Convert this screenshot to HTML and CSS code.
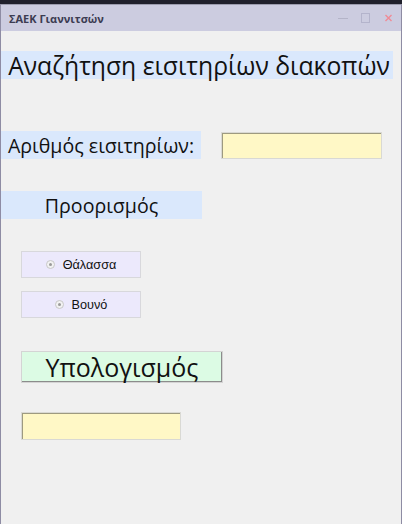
FILE: index.html
```html
<!DOCTYPE html>
<html lang="el">
<head>
<meta charset="utf-8">
<title>ΣΑΕΚ Γιαννιτσών</title>
<link rel="stylesheet" href="styles.css">
</head>
<body>
<div class="topstrip"></div>
<div class="window">
  <div class="titlebar">
    <span class="title">ΣΑΕΚ Γιαννιτσών</span>
    <div class="controls">
      <svg class="ctl" width="12" height="12" viewBox="0 0 12 12"><line x1="1" y1="6.5" x2="11" y2="6.5" stroke="#b4b4c8" stroke-width="1"/></svg>
      <svg class="ctl" width="12" height="12" viewBox="0 0 12 12"><rect x="1.5" y="1.5" width="8" height="9" fill="none" stroke="#b4b4cc" stroke-width="1"/></svg>
      <svg class="ctl" width="12" height="12" viewBox="0 0 12 12"><path d="M2.5 3 L8.5 9 M8.5 3 L2.5 9" stroke="#f08a96" stroke-width="1.4"/></svg>
    </div>
  </div>
  <div class="content">
    <div class="heading">Αναζήτηση εισιτηρίων διακοπών</div>
    <div class="row tickets">
      <div class="label">Αριθμός εισιτηρίων:</div>
      <div class="field input"></div>
    </div>
    <div class="label dest">Προορισμός</div>
    <div class="radio sea"><span class="dot"></span>Θάλασσα</div>
    <div class="radio mountain"><span class="dot"></span>Βουνό</div>
    <div class="button">Υπολογισμός</div>
    <div class="field output"></div>
  </div>
</div>
</body>
</html>
```
FILE: styles.css
```css
html, body {
  margin: 0;
  padding: 0;
  width: 402px;
  height: 524px;
  overflow: hidden;
  background: #f0f0f0;
  font-family: "Open Sans", "Noto Sans", sans-serif;
}
.topstrip {
  height: 4px;
  background: #20202c;
}
.window {
  height: 520px;
  border-left: 1px solid #8e8ca4;
  border-right: 1px solid #8e8ca4;
  border-top: 1px solid #9c9cae;
  box-sizing: border-box;
  background: #f0f0f0;
}
.titlebar {
  height: 26px;
  background: #cccce0;
  display: flex;
  align-items: center;
  justify-content: space-between;
  padding: 0 6px 0 8px;
}
.title {
  font-family: "Open Sans", "Noto Sans", sans-serif;
  font-weight: 700;
  font-size: 11px;
  color: #3c3c52;
}
.controls {
  display: flex;
  gap: 11px;
  align-items: center;
}
.content {
  display: flex;
  flex-direction: column;
  align-items: flex-start;
  padding-top: 20px;
}
.heading {
  width: 392px;
  height: 28px;
  padding-left: 4px;
  box-sizing: border-box;
  background: #dae8fc;
  font-size: 24.7px;
  line-height: 30px;
  color: #111;
  text-align: center;
  white-space: nowrap;
  overflow: visible;
}
.row {
  display: flex;
  align-items: center;
}
.tickets {
  margin-top: 52px;
  gap: 20px;
}
.label {
  width: 200px;
  height: 28px;
  background: #dae8fc;
  font-size: 19.6px;
  line-height: 29px;
  color: #111;
  text-align: center;
  white-space: nowrap;
}
.dest {
  width: 201px;
  margin-top: 32px;
}
.field {
  box-sizing: border-box;
  width: 160px;
  height: 27px;
  background: #fff8c6;
  border: 1px solid #d9d9d4;
  box-shadow: inset 1px 1px 0 #9e9a80;
}
.radio {
  box-sizing: border-box;
  width: 120px;
  height: 27px;
  margin-left: 20px;
  background: #ece9fc;
  border: 1px solid #d8d8dc;
  display: flex;
  align-items: center;
  justify-content: center;
  font-family: "Liberation Sans", Arial, sans-serif;
  font-size: 12.7px;
  color: #111;
}
.sea {
  margin-top: 32px;
}
.mountain {
  margin-top: 13px;
}
.dot {
  box-sizing: border-box;
  width: 9px;
  height: 9px;
  border-radius: 50%;
  border: 1px solid #c8c8c8;
  background: #f2f2f2;
  margin-right: 8px;
  position: relative;
}
.dot::after {
  content: "";
  position: absolute;
  left: 2px;
  top: 2px;
  width: 3px;
  height: 3px;
  border-radius: 50%;
  background: #9a9a9a;
}
.button {
  box-sizing: border-box;
  width: 202px;
  height: 32px;
  margin-top: 33px;
  margin-left: 20px;
  background: #dcfbe4;
  border: 1px solid #d4d4d4;
  box-shadow: inset -1px -1px 0 #8c8c8c;
  font-size: 25px;
  line-height: 31px;
  text-align: center;
  color: #111;
}
.input {
  width: 161px;
}
.output {
  margin-top: 29px;
  margin-left: 20px;
  width: 160px;
  height: 28px;
}
```
